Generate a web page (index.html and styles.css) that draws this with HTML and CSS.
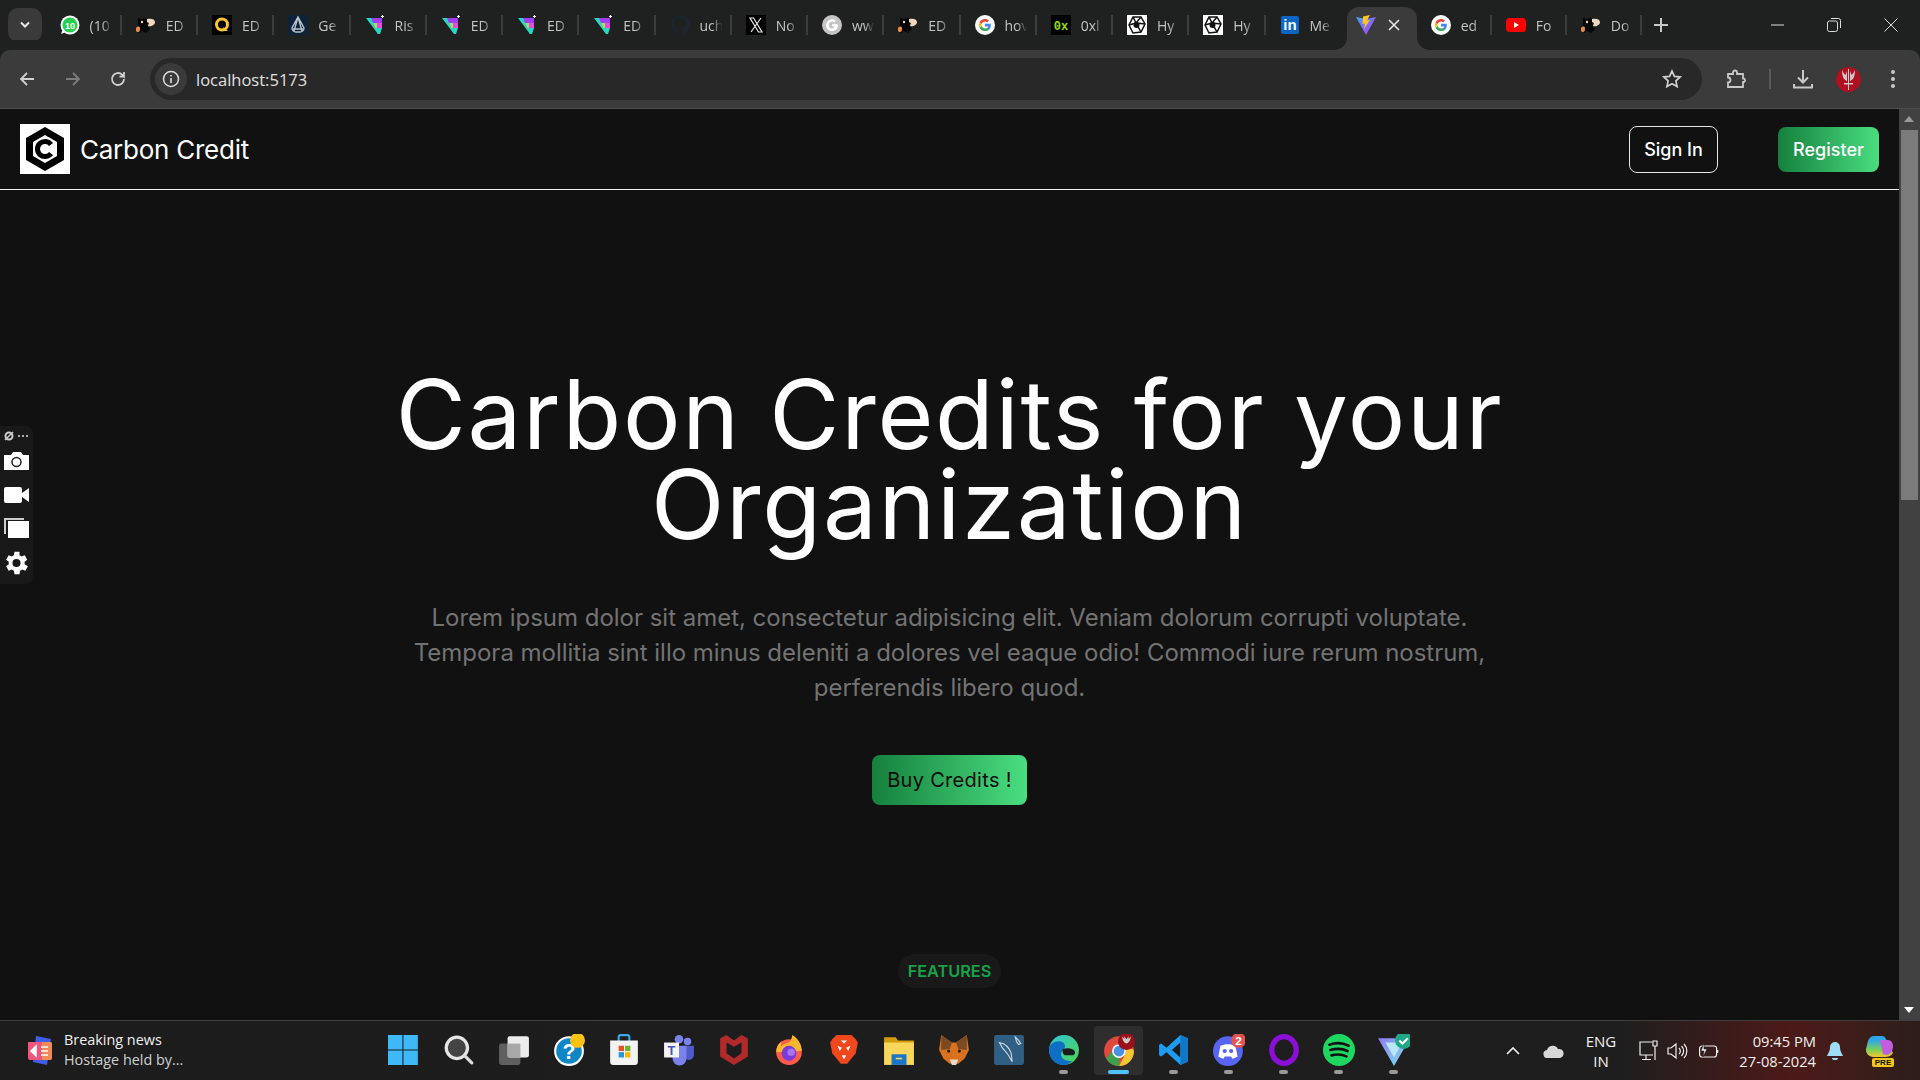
FILE: index.html
```html
<!DOCTYPE html>
<html>
<head>
  <title>Carbon Credit</title>
  <meta charset="utf-8">
  <link rel="stylesheet" href="styles.css">
</head>
<body>
  <svg class="defs" width="0" height="0">
    <defs>
      <symbol id="i-monkey" viewBox="0 0 20 20">
        <path d="M2 3l4 1 4-1 2 3-1 4 3 4-4 4-4-2-3 2-2-4 1-4z" fill="#050505"/>
        <path d="M11 4c4-1 8 0 8 3s-4 5-7 4l1-3-2-1z" fill="#f2d6bd"/>
        <path d="M0 13c1-2 4-2 4 0s0 4-2 4-3-3-2-4z" fill="#e98a45"/>
        <circle cx="6" cy="7" r="1.2" fill="#f2d6bd"/>
      </symbol>
      <symbol id="i-tri" viewBox="0 0 20 20">
        <path d="M1 3h6l8 16h-2z" fill="#27d8c0"/>
        <path d="M6 3h11v10H10z" fill="#a23df5"/>
        <path d="M8 8h4v5h-2z" fill="#8cf05a"/>
        <path d="M12 8h5v5h-5z" fill="#e84de0"/>
        <path d="M10 13h7l-2 6h-2z" fill="#27d8c0"/>
        <path d="M17 0h1v1h1v1h-1v1h-1V2h-1V1h1z" fill="#fff"/>
      </symbol>
      <symbol id="i-google" viewBox="0 0 20 20">
        <circle cx="10" cy="10" r="10" fill="#fff"/>
        <path d="M15.8 10.2c0-.5 0-1-.1-1.4H10v2.7h3.3c-.2.8-.6 1.4-1.3 1.9l2 1.6c1.1-1.1 1.8-2.8 1.8-4.800z" fill="#4285f4"/>
        <path d="M10 16c1.6 0 3-.5 4-1.500l-2-1.600c-.5.4-1.200.6-2 .6-1.600 0-2.900-1-3.400-2.400l-2 1.600C5.600 14.700 7.600 16 10 16z" fill="#34a853"/>
        <path d="M6.600 11.100c-.2-.7-.2-1.500 0-2.200l-2-1.600c-.8 1.700-.8 3.700 0 5.400z" fill="#fbbc05"/>
        <path d="M10 6.400c.9 0 1.700.3 2.300.9l1.700-1.700C13 4.600 11.600 4 10 4 7.600 4 5.600 5.300 4.600 7.300l2 1.600C7.100 7.500 8.400 6.400 10 6.400z" fill="#ea4335"/>
      </symbol>
      <symbol id="i-hy" viewBox="0 0 20 20">
        <rect width="20" height="20" fill="#fff"/>
        <path d="M6 2h8l4 7-4 8-8 1-4-8z" fill="none" stroke="#111" stroke-width="1.5"/>
        <path d="M6 2l3 6-7 2M14 2L9 8l5 9M18 9L9 8" fill="none" stroke="#111" stroke-width="1.5"/>
        <circle cx="9.5" cy="10" r="3" fill="#111"/>
      </symbol>
      <linearGradient id="vite-body" x1="0" y1="0" x2="1" y2="1">
        <stop offset="0" stop-color="#41a5f5"/>
        <stop offset="1" stop-color="#bd34fe"/>
      </linearGradient>
    </defs>
  </svg>

  <!-- browser tabs -->
  <div class="tabstrip">
    <div class="tab-menu"><svg width="12" height="8" viewBox="0 0 12 8"><path d="M2 1.500l4 4 4-4" fill="none" stroke="#e8e8e8" stroke-width="2"/></svg></div>

    <div class="tab"><svg class="fav" viewBox="0 0 20 20"><circle cx="10" cy="10" r="9.500" fill="#fff"/><circle cx="10" cy="10" r="7.500" fill="#25d04f"/><path d="M1 19l2-5 3 3z" fill="#fff"/><text x="10" y="13.500" class="fav-num">10</text></svg><span class="tab-text">(10</span></div>
    <div class="tab"><svg class="fav"><use href="#i-monkey"/></svg><span class="tab-text">ED</span></div>
    <div class="tab"><svg class="fav" viewBox="0 0 20 20"><rect width="20" height="20" fill="#000"/><circle cx="10" cy="9.500" r="5.500" fill="none" stroke="#fbc531" stroke-width="3"/><path d="M11 12l5 4h-4z" fill="#fbc531"/></svg><span class="tab-text">ED</span></div>
    <div class="tab"><svg class="fav" viewBox="0 0 20 20"><rect width="20" height="20" fill="#0e2238"/><path d="M10 2l6 11a4 4 0 0 1-4 4H8a4 4 0 0 1-4-4z M5 14h10 M10 2L6 16 M10 2l4 14" fill="none" stroke="#b9c3cc" stroke-width="1.400"/></svg><span class="tab-text">Ge</span></div>
    <div class="tab"><svg class="fav"><use href="#i-tri"/></svg><span class="tab-text">Ris</span></div>
    <div class="tab"><svg class="fav"><use href="#i-tri"/></svg><span class="tab-text">ED</span></div>
    <div class="tab"><svg class="fav"><use href="#i-tri"/></svg><span class="tab-text">ED</span></div>
    <div class="tab"><svg class="fav"><use href="#i-tri"/></svg><span class="tab-text">ED</span></div>
    <div class="tab"><svg class="fav" viewBox="0 0 20 20"><path d="M10 1a9 9 0 0 0-3 17.500v-3c-3 .5-3.500-1.500-4-2 2-.5 2.500 1 4 1 0-1 .5-1.500 1-2-3-.5-4-2-4-4.500 0-1 .5-2 1-2.500 0-1 0-2 .5-2.500 1 0 2 .5 3 1 1-.3 2-.3 3 0 1-.5 2-1 3-1 .5.500.5 1.500.5 2.500.5.500 1 1.500 1 2.500 0 2.500-1 4-4 4.500.5.500 1 1.500 1 2.500v4A9 9 0 0 0 10 1z" fill="#1c2530"/></svg><span class="tab-text">uch</span></div>
    <div class="tab"><svg class="fav" viewBox="0 0 20 20"><rect width="20" height="20" fill="#000"/><path d="M4 3h3.500L16 17h-3.500zM15 3L5 17" fill="none" stroke="#e8e8e8" stroke-width="1.200"/></svg><span class="tab-text">No</span></div>
    <div class="tab"><svg class="fav" viewBox="0 0 20 20"><circle cx="10" cy="10" r="10" fill="#c4c4c4"/><path d="M15 9H10v2.500h2.500c-.5 1.200-1.400 1.900-2.500 1.900a3.400 3.400 0 1 1 2.200-6l1.600-1.800A6 6 0 1 0 16 10z" fill="#fff"/></svg><span class="tab-text">ww</span></div>
    <div class="tab"><svg class="fav"><use href="#i-monkey"/></svg><span class="tab-text">ED</span></div>
    <div class="tab"><svg class="fav"><use href="#i-google"/></svg><span class="tab-text">hov</span></div>
    <div class="tab"><svg class="fav" viewBox="0 0 20 20"><rect width="20" height="20" fill="#000"/><text x="10" y="14.500" class="fav-hex">0x</text></svg><span class="tab-text">0xl</span></div>
    <div class="tab"><svg class="fav"><use href="#i-hy"/></svg><span class="tab-text">Hy</span></div>
    <div class="tab"><svg class="fav"><use href="#i-hy"/></svg><span class="tab-text">Hy</span></div>
    <div class="tab tab-nosep"><svg class="fav" viewBox="0 0 20 20"><rect x="1" y="1" width="18" height="18" rx="2" fill="#0a66c2"/><text x="10" y="15" class="fav-in">in</text></svg><span class="tab-text">Me</span></div>
    <div class="tab tab-active">
      <svg class="fav" viewBox="0 0 20 20"><path d="M0 2l10 18L20 2l-9.500 2z" fill="url(#vite-body)"/><path d="M14 0L7 1.500 6.500 9 9 8.500 8 14l6-9-3 .5z" fill="#ffc517"/></svg>
      <svg class="tab-x" width="12" height="12" viewBox="0 0 12 12"><path d="M1 1l10 10M11 1L1 11" stroke="#e8e8e8" stroke-width="1.600"/></svg>
    </div>
    <div class="tab tab-narrow"><svg class="fav"><use href="#i-google"/></svg><span class="tab-text">ed</span></div>
    <div class="tab tab-narrow"><svg class="fav" viewBox="0 0 20 20"><rect y="3" width="20" height="14" rx="3.500" fill="#f00"/><path d="M8 7l5 3-5 3z" fill="#fff"/></svg><span class="tab-text">Fo</span></div>
    <div class="tab tab-narrow"><svg class="fav"><use href="#i-monkey"/></svg><span class="tab-text">Do</span></div>

    <div class="tab-new"><svg width="14" height="14" viewBox="0 0 14 14"><path d="M7 0v14M0 7h14" stroke="#c8c8c8" stroke-width="2"/></svg></div>

    <div class="win-btns">
      <svg width="14" height="14" viewBox="0 0 14 14"><path d="M1 7h13" stroke="#ddd"/></svg>
      <svg width="14" height="14" viewBox="0 0 14 14"><rect x=".5" y="3" width="10" height="10.500" rx="2" fill="none" stroke="#ddd"/><path d="M4 .5h7.500a2 2 0 0 1 2 2V10" fill="none" stroke="#ddd"/></svg>
      <svg width="14" height="14" viewBox="0 0 14 14"><path d="M.5.5l13 13M13.500.5l-13 13" stroke="#ddd"/></svg>
    </div>
  </div>

  <!-- address bar -->
  <div class="toolbar">
    <div class="nav-btns">
      <svg width="18" height="18" viewBox="0 0 18 18"><path d="M16 9H3M9 3L3 9l6 6" fill="none" stroke="#d0d0d0" stroke-width="1.800"/></svg>
      <svg width="18" height="18" viewBox="0 0 18 18"><path d="M2 9h13M9 3l6 6-6 6" fill="none" stroke="#7c7c7c" stroke-width="1.800"/></svg>
      <svg width="18" height="18" viewBox="0 0 18 18"><path d="M15 9a6 6 0 1 1-1.800-4.300L15 6.500V2M15 6.500h-4.500" fill="none" stroke="#d0d0d0" stroke-width="1.800"/></svg>
    </div>
    <div class="address">
      <div class="site-info"><svg width="18" height="18" viewBox="0 0 18 18"><circle cx="9" cy="9" r="7.500" fill="none" stroke="#dcdcdc" stroke-width="1.500"/><path d="M9 8v5M9 5v1.600" stroke="#dcdcdc" stroke-width="1.600"/></svg></div>
      <span class="url">localhost:5173</span>
      <svg class="star" width="20" height="20" viewBox="0 0 20 20"><path d="M10 2l2.400 5.400 5.800.6-4.300 3.900 1.200 5.700L10 14.700l-5.100 2.900 1.200-5.700L1.800 8l5.800-.6z" fill="none" stroke="#d0d0d0" stroke-width="1.700"/></svg>
    </div>
    <div class="tool-btns">
      <svg width="20" height="20" viewBox="0 0 20 20"><path d="M2 5h5V3.500a2 2 0 0 1 4 0V5h6v4.500h1a2 2 0 0 1 0 3.500h-1v5H2v-4.500a2.500 2.500 0 0 0 0-5z" fill="none" stroke="#c8c8c8" stroke-width="1.800"/></svg>
      <span class="tool-sep"></span>
      <svg class="tool-dl" width="20" height="20" viewBox="0 0 20 20"><path d="M10 1v12M5 8.500l5 5 5-5M1 15v3.500h18V15" fill="none" stroke="#c8c8c8" stroke-width="2"/></svg>
      <svg class="tool-avatar" width="25" height="25" viewBox="0 0 25 25"><circle cx="12.500" cy="12.500" r="12.500" fill="#b01020"/><path d="M6 3c0 7 2 10 5 11V4L9.500 8C8 7 7 5 6 3zM19 3c0 7-2 10-5 11V4l1.500 4C17 7 18 5 19 3zM12 2h1v21h-1zM8 16h9v1.500H8z" fill="#c9c9c9"/></svg>
      <svg class="tool-dots" width="6" height="20" viewBox="0 0 6 20"><circle cx="3" cy="3" r="2" fill="#c8c8c8"/><circle cx="3" cy="10" r="2" fill="#c8c8c8"/><circle cx="3" cy="17" r="2" fill="#c8c8c8"/></svg>
    </div>
  </div>

  <div class="viewport">
    <div class="page">
      <nav class="navbar">
        <a class="brand">
          <svg class="brand-logo" viewBox="0 0 50 50">
            <rect width="50" height="50" fill="#fff"/>
            <path d="M25 3l19 11v22L25 47 6 36V14z" fill="#000"/>
            <path d="M25 11l12 7v14l-12 7-12-7V18z" fill="#fff"/>
            <path d="M31 20.500a7.500 7.500 0 1 0 0 9" fill="none" stroke="#000" stroke-width="5"/>
            <circle cx="25" cy="25" r="2.500" fill="#fff"/>
          </svg>
          <span class="brand-name">Carbon Credit</span>
        </a>
        <div class="nav-actions">
          <button class="btn btn-outline">Sign In</button>
          <button class="btn btn-green">Register</button>
        </div>
      </nav>

      <section class="hero">
        <h1 class="hero-title">Carbon Credits for your<br>Organization</h1>
        <p class="hero-text">Lorem ipsum dolor sit amet, consectetur adipisicing elit. Veniam dolorum corrupti voluptate.<br>Tempora mollitia sint illo minus deleniti a dolores vel eaque odio! Commodi iure rerum nostrum,<br>perferendis libero quod.</p>
        <button class="btn btn-buy">Buy Credits !</button>
        <span class="pill">FEATURES</span>
      </section>

      <!-- screen recorder extension panel -->
      <div class="recorder">
        <svg class="rec-top" width="26" height="10" viewBox="0 0 26 10"><circle cx="5" cy="5" r="3.500" fill="none" stroke="#ccc" stroke-width="2"/><path d="M1 9l8-8" stroke="#ccc" stroke-width="1.500"/><circle cx="15" cy="5" r="1" fill="#ddd"/><circle cx="19" cy="5" r="1" fill="#ddd"/><circle cx="23" cy="5" r="1" fill="#ddd"/></svg>
        <svg class="rec-cam" width="25" height="18" viewBox="0 0 25 18"><path d="M0 3h7l2-3h8l2 3h6v15H0z" fill="#fff"/><circle cx="12.500" cy="10" r="4.500" fill="#fff" stroke="#222" stroke-width="1.500"/></svg>
        <svg class="rec-video" width="25" height="16" viewBox="0 0 25 16"><rect width="18" height="16" rx="2" fill="#fff"/><path d="M18 6l7-5v14l-7-5z" fill="#fff"/></svg>
        <svg class="rec-win" width="25" height="20" viewBox="0 0 25 20"><path d="M0 0h20v2H2v14H0z" fill="#ccc"/><rect x="4" y="3" width="21" height="17" fill="#fff"/></svg>
        <svg class="rec-gear" width="25" height="24" viewBox="3 2.500 18 19"><path fill="#fff" fill-rule="evenodd" d="M18.400 13a7.500 7.500 0 0 0 0-2l2.100-1.600-2-3.500-2.500 1a7.500 7.500 0 0 0-1.700-1L14.400 3h-4L10 5.900a7.500 7.500 0 0 0-1.700 1l-2.500-1-2 3.500L5.900 11a7.500 7.500 0 0 0 0 2l-2.100 1.600 2 3.500 2.500-1a7.500 7.500 0 0 0 1.700 1l.4 2.900h4l.4-2.900a7.500 7.500 0 0 0 1.700-1l2.500 1 2-3.500zM12 15.200a3.200 3.200 0 1 1 0-6.400 3.200 3.200 0 0 1 0 6.400z"/></svg>
      </div>
    </div>

    <div class="scrollbar">
      <div class="scroll-up"></div>
      <div class="scroll-thumb"></div>
      <div class="scroll-track"></div>
      <div class="scroll-down"></div>
    </div>
  </div>

  <!-- windows taskbar -->
  <div class="taskbar">
    <div class="news">
      <svg width="32" height="32" viewBox="0 0 32 32"><path d="M12 1l15 3-4 26-14-3z" fill="#3f5ee8"/><path d="M4 7h22a2 2 0 0 1 2 2v14a2 2 0 0 1-2 2H6a2 2 0 0 1-2-2z" fill="#f0567c"/><path d="M18 7h8a2 2 0 0 1 2 2v14a2 2 0 0 1-2 2h-8z" fill="#f08a5a"/><path d="M7 16l5-5v10zM17 12h7M17 16h7M17 20h7" fill="#fff" stroke="#fff" stroke-width="1.500"/></svg>
      <div class="news-text">
        <div class="news-head">Breaking news</div>
        <div class="news-sub">Hostage held by...</div>
      </div>
    </div>

    <div class="task-icons">
      <div class="task"><svg viewBox="1 0 30 30"><path d="M1 1h13.500v13.500H1zM15.500 1H29v13.500H15.500zM1 15.500h13.500V29H1zM15.500 15.500H29V29H15.500z" fill="#3fb8f8"/></svg></div>
      <div class="task"><svg viewBox="0 0 30 30"><circle cx="13" cy="13" r="10" fill="#444" stroke="#e6e6e6" stroke-width="3"/><path d="M20 20l7 7" stroke="#ddd" stroke-width="3" stroke-linecap="round"/></svg></div>
      <div class="task"><svg viewBox="0 0 30 30"><rect x="1" y="9" width="20" height="20" rx="2" fill="#5f5f5f"/><rect x="9" y="2" width="20" height="20" rx="2" fill="#ececec"/><rect x="9" y="9" width="12" height="13" fill="#a8a8a8"/></svg></div>
      <div class="task"><svg viewBox="0 0 30 30"><circle cx="15" cy="16" r="13" fill="#0f86c6" stroke="#fff" stroke-width="2"/><text x="15" y="23" class="help-q">?</text><circle cx="23" cy="6" r="7" fill="#ffc20e"/></svg></div>
      <div class="task"><svg viewBox="0 0 30 30"><path d="M10 7V3a2 2 0 0 1 2-2h6a2 2 0 0 1 2 2v4" fill="none" stroke="#39a9e8" stroke-width="2"/><path d="M2 6h26v20a3 3 0 0 1-3 3H5a3 3 0 0 1-3-3z" fill="#f3f3f3"/><rect x="10" y="11" width="5" height="5" fill="#e8502a"/><rect x="16" y="11" width="5" height="5" fill="#6fb52c"/><rect x="10" y="17" width="5" height="5" fill="#1f9be0"/><rect x="16" y="17" width="5" height="5" fill="#fbb80a"/></svg></div>
      <div class="task"><svg viewBox="0 0 30 30"><circle cx="23" cy="7" r="3.500" fill="#7b83eb"/><circle cx="15" cy="5" r="4" fill="#7b83eb"/><path d="M19 11h10v9a5 5 0 0 1-7 4z" fill="#5059c9"/><path d="M9 11h13v12a6 6 0 0 1-13 0z" fill="#7b83eb"/><rect x="1" y="8" width="14" height="14" fill="#f4f4f4"/><text x="8" y="19.500" class="teams-t">T</text></svg></div>
      <div class="task"><svg viewBox="0 0 30 30"><path d="M2 4l6-3 7 5 7-5 6 3v17l-13 8-13-8zM8 8v10l7 5 7-5V8l-7 4z" fill="#b02a2a" fill-rule="evenodd"/></svg></div>
      <div class="task"><svg viewBox="0 0 30 30"><circle cx="15" cy="17" r="12" fill="#ff5a4a"/><path d="M3 17a12 12 0 0 1 5-10l-1 5c3-3 6-4 8-4 2-2 3-5 3-7 5 3 9 8 9 15z" fill="#ffb52e"/><circle cx="15" cy="18" r="7" fill="#7a3bd6"/><circle cx="17" cy="17" r="3.500" fill="#a774f0"/></svg></div>
      <div class="task"><svg viewBox="0 0 30 30"><path d="M8 1h14l4 4 2 3-2 10-8 10h-6L4 18 2 8l2-3z" fill="#f1471d"/><path d="M9 11l4 2-2 3zM21 11l-4 2 2 3zM13 20h4l-2 4z" fill="#fff"/><path d="M12 6h6l-3 3z" fill="#fff"/></svg></div>
      <div class="task"><svg viewBox="0 0 30 30"><path d="M1 3h11l2 3h15v4H1z" fill="#d39c0e"/><path d="M1 8h28v21H1z" fill="#f9d65c"/><path d="M8 19h14v10H8z" fill="#1976c8"/><path d="M12 23h6" stroke="#f9d65c" stroke-width="1.500"/></svg></div>
      <div class="task"><svg viewBox="0 0 30 30"><path d="M3 1l10 7h4L27 1l2 14-4 8-6 5h-8l-6-5-4-8z" fill="#d9711f"/><path d="M3 1l10 7-2 6-8 1zM27 1L17 8l2 6 8 1z" fill="#7a4a25"/><path d="M11 24h8l-2 5h-4z" fill="#e8dcc8"/><circle cx="10" cy="16" r="1.500" fill="#222"/><circle cx="20" cy="16" r="1.500" fill="#222"/></svg></div>
      <div class="task"><svg viewBox="0 0 30 30"><rect x="1" y="1" width="28" height="28" rx="2" fill="#2f5f82"/><path d="M6 8c5 1 9 4 11 10l1 8c-2-3-3-6-5-8s-5-5-7-10zM21 3l3 3 2 3-2 1-2-3z" fill="none" stroke="#cfdbe4"/></svg></div>
      <div class="task task-open"><svg viewBox="0 0 30 30"><defs><linearGradient id="edge" x1="0" y1="0" x2="1" y2="1"><stop offset="0" stop-color="#2fc7d8"/><stop offset="1" stop-color="#4fd34f"/></linearGradient></defs><circle cx="15" cy="15" r="14" fill="url(#edge)"/><path d="M1 15c0-6 6-9 11-8 4 1 5 5 3 7-3 2-4 6-1 9 2 2 6 3 9 2-3 3-6 4-9 4C7 29 1 23 1 15z" fill="#0f6fc4"/><path d="M14 14c4-1 9-1 11 2 1 2 0 4-3 4h-6c-2-1-3-4-2-6z" fill="#1c1c1c"/></svg></div>
      <div class="task task-active"><svg viewBox="0 0 30 30"><circle cx="15" cy="16" r="14" fill="#dd4b3e"/><path d="M15 30A14 14 0 0 1 3 23l7-9 6 6z" fill="#3f9f4e"/><path d="M29 16a14 14 0 0 1-14 14l6-11 1-5h6z" fill="#f2c531"/><circle cx="15" cy="16" r="6.500" fill="#fff"/><circle cx="15" cy="16" r="5" fill="#4a90e2"/><circle cx="22" cy="7" r="8" fill="#9a0f1c"/><path d="M18 2c0 4 2 6 4 7 2-1 4-3 4-7l-2 3V2l-2 3-2-3v3z" fill="#ccc"/></svg></div>
      <div class="task task-open"><svg viewBox="0 0 30 30"><path d="M21 1l7 3v22l-7 3L8 17l-5 4-2-1V10l2-1 5 4z" fill="#1f9cf0"/><path d="M21 8l-8 7 8 7z" fill="#1c1c1c"/><path d="M21 1l7 3v22l-7 3z" fill="#0f78c8"/></svg></div>
      <div class="task task-open"><svg viewBox="0 0 30 30"><circle cx="14" cy="16" r="14" fill="#5865f2"/><path d="M7 11c4-2 10-2 14 0l2 10c-2 1-3 2-5 2l-1-2H11l-1 2c-2 0-3-1-5-2z" fill="#fff"/><circle cx="11" cy="16" r="2" fill="#5865f2"/><circle cx="17" cy="16" r="2" fill="#5865f2"/><circle cx="24" cy="6" r="7" fill="#e5534f"/><text x="24" y="10" class="badge-num">2</text></svg></div>
      <div class="task task-open"><svg viewBox="0 0 30 30"><ellipse cx="15" cy="15" rx="11.500" ry="12.500" fill="none" stroke="#8a10d8" stroke-width="5"/></svg></div>
      <div class="task task-open"><svg viewBox="0 0 30 30"><circle cx="15" cy="15" r="15" fill="#1ed760"/><path d="M6 10c6-2 12-2 18 1M7 15c5-1.500 11-1.500 16 1M8 20c4-1 10-1 14 1" fill="none" stroke="#111" stroke-width="2.500" stroke-linecap="round"/></svg></div>
      <div class="task task-open"><svg viewBox="0 0 30 30"><defs><linearGradient id="vee" x1="0" y1="0" x2="1" y2="1"><stop offset="0" stop-color="#8f7bf0"/><stop offset="1" stop-color="#7de8f0"/></linearGradient></defs><path d="M0 4h30L15 30z" fill="url(#vee)"/><path d="M7 8h16l-8 14z" fill="#b9e6f5"/><circle cx="24" cy="6" r="8" fill="#1fa888"/><path d="M20 6l3 3 5-5" fill="none" stroke="#fff" stroke-width="2"/></svg></div>
    </div>

    <div class="tray">
      <svg class="tray-chevron" width="14" height="9" viewBox="0 0 14 9"><path d="M1 8l6-6 6 6" fill="none" stroke="#eee" stroke-width="1.600"/></svg>
      <svg class="tray-cloud" width="21" height="14" viewBox="0 0 21 14"><path d="M5 14a4 4 0 0 1-1-8 6 6 0 0 1 11-1 4.500 4.500 0 0 1 2 9z" fill="#d8d8d8"/></svg>
      <div class="tray-lang">ENG<br>IN</div>
      <svg class="tray-net" width="20" height="21" viewBox="0 0 20 21"><path d="M13 2H1v13h13M7 15v4M3 19.500h9M16 6v14M14 1h4v5h-4z" fill="none" stroke="#eee" stroke-width="1.200"/></svg>
      <svg class="tray-vol" width="21" height="18" viewBox="0 0 21 18"><path d="M1 6h3l5-4v14l-5-4H1zM12 6a4 4 0 0 1 0 6M14.500 4a7 7 0 0 1 0 10M17 2a10 10 0 0 1 0 14" fill="none" stroke="#eee" stroke-width="1.200"/></svg>
      <svg class="tray-bat" width="20" height="16" viewBox="0 0 20 16"><rect x=".6" y="3" width="17" height="11" rx="2.500" fill="none" stroke="#eee" stroke-width="1.200"/><path d="M18.500 7v3" stroke="#eee" stroke-width="1.600"/><path d="M5 0L2 8h3l-1 6 4-8H5z" fill="#eee" stroke="#222" stroke-width=".6"/></svg>
      <div class="tray-clock"><div>09:45 PM</div><div>27-08-2024</div></div>
      <svg class="tray-bell" width="16" height="20" viewBox="0 0 16 20"><path d="M8 1a5 5 0 0 1 5 5c0 5 3 8 3 9H0c0-1 3-4 3-9a5 5 0 0 1 5-5z" fill="#9fdcf5"/><path d="M5 17h6a3 2 0 0 1-6 0z" fill="#9fdcf5"/></svg>
      <div class="copilot">
        <svg width="29" height="24" viewBox="0 0 29 24"><defs><linearGradient id="cop" x1="0" y1="0" x2="0" y2="1"><stop offset=".2" stop-color="#2ea6e8"/><stop offset=".65" stop-color="#7bd05a"/><stop offset="1" stop-color="#f5c72e"/></linearGradient></defs><path d="M9 1h8c2 0 3 1 4 3l7 14c-2 3-5 4-8 4H8a7 7 0 0 1-7-8l2-8c1-3 3-5 6-5z" fill="url(#cop)"/><path d="M15 5h8c3 0 5 3 5 6 0 4-2 8-6 9l-4-1z" fill="#c45ce0"/></svg>
        <span class="pre-badge">PRE</span>
      </div>
    </div>
  </div>
</body>
</html>
```

FILE: styles.css
```css
* {
  box-sizing: border-box;
}

body {
  margin: 0;
  width: 1920px;
  height: 1080px;
  overflow: hidden;
  display: flex;
  flex-direction: column;
  background: #111;
  font-family: "Open Sans", "Noto Sans", sans-serif;
}

.defs {
  position: absolute;
}

/* browser tabs */
.tabstrip {
  height: 50px;
  display: flex;
  align-items: center;
  background: #1f2120;
  padding-left: 8px;
  flex-shrink: 0;
}

.tab-menu {
  width: 34px;
  height: 34px;
  margin-right: 3.5px;
  border-radius: 10px;
  background: #3a3a3a;
  display: flex;
  align-items: center;
  justify-content: center;
}

.tab {
  width: 76.25px;
  height: 50px;
  padding-left: 14px;
  display: flex;
  align-items: center;
  gap: 10px;
  position: relative;
}

.tab-narrow {
  width: 75px;
}

.tab::after {
  content: "";
  position: absolute;
  right: 0;
  top: 15px;
  height: 20px;
  width: 2px;
  background: #3c3e3e;
}

.tab-nosep::after {
  display: none;
}

.fav {
  width: 20px;
  height: 20px;
  flex-shrink: 0;
}

.fav-num {
  font: 700 9px "Liberation Sans", sans-serif;
  fill: #fff;
  text-anchor: middle;
}

.fav-hex {
  font: 700 12px "Liberation Mono", monospace;
  fill: #8fe000;
  text-anchor: middle;
}

.fav-in {
  font: 700 15px "Liberation Sans", sans-serif;
  fill: #fff;
  text-anchor: middle;
}

.tab-text {
  width: 27px;
  font-size: 14px;
  color: #c4c4c4;
  white-space: nowrap;
  -webkit-mask-image: linear-gradient(to right, #000 45%, transparent 82%);
  mask-image: linear-gradient(to right, #000 45%, transparent 82%);
}

.tab-active {
  width: 70px;
  height: 43px;
  margin-top: 7px;
  margin-left: 5px;
  padding: 0 0 8px 9px;
  background: #3b3b3b;
  border-radius: 12px 12px 0 0;
  gap: 12px;
}

.tab-active::before,
.tab-active::after {
  content: "";
  display: block;
  position: absolute;
  top: auto;
  bottom: 0;
  width: 12px;
  height: 12px;
}

.tab-active::before {
  left: -12px;
  background: radial-gradient(circle at 0 0, transparent 11.5px, #3b3b3b 12px);
}

.tab-active::after {
  right: -12px;
  background: radial-gradient(circle at 100% 0, transparent 11.5px, #3b3b3b 12px);
}

.tab-new {
  width: 38px;
  display: flex;
  justify-content: center;
}

.win-btns {
  margin-left: auto;
  padding-right: 22px;
  display: flex;
  gap: 43px;
}

/* address bar */
.toolbar {
  height: 59px;
  flex-shrink: 0;
  background: #3b3b3b;
  border-bottom: 1px solid #4c4c4c;
  display: flex;
  align-items: center;
  border-radius: 10px 10px 0 0;
  box-shadow: 0 -10px 0 #1f2120;
}

.nav-btns {
  width: 150px;
  padding: 0 23px 0 18px;
  display: flex;
  justify-content: space-between;
}

.address {
  width: 1552px;
  height: 42px;
  border-radius: 21px;
  background: #282828;
  display: flex;
  align-items: center;
  padding-left: 5px;
  padding-right: 20px;
}

.site-info {
  width: 32px;
  height: 32px;
  border-radius: 50%;
  background: #3a3a3a;
  display: flex;
  align-items: center;
  justify-content: center;
}

.url {
  margin-left: 9px;
  font-size: 16.5px;
  color: #e0e0e0;
}

.star {
  margin-left: auto;
}

.tool-btns {
  flex: 1;
  display: flex;
  align-items: center;
  padding-left: 24px;
}

.tool-sep {
  width: 2px;
  height: 20px;
  background: #5a5a5a;
  margin-left: 23px;
}

.tool-dl {
  margin-left: 22px;
}

.tool-avatar {
  margin-left: 23px;
}

.tool-dots {
  margin-left: 29px;
}

/* page */
.viewport {
  flex: 1;
  display: flex;
  min-height: 0;
  position: relative;
}

.page {
  flex: 1;
  background: #111;
  overflow: hidden;
  color: #fff;
  font-family: "Inter", "Lato", sans-serif;
}

.navbar {
  height: 81px;
  border-bottom: 1px solid #f2f2f2;
  display: flex;
  align-items: center;
  justify-content: space-between;
  padding: 0 20px;
}

.brand {
  display: flex;
  align-items: center;
  gap: 10px;
}

.brand-logo {
  width: 50px;
  height: 50px;
}

.brand-name {
  font-size: 26px;
  letter-spacing: -0.25px;
}

.nav-actions {
  display: flex;
  align-items: center;
  gap: 60px;
}

.btn {
  font-family: inherit;
  font-size: 18px;
  font-weight: 500;
  border-radius: 8px;
  cursor: pointer;
}

.btn-outline {
  width: 89px;
  height: 47px;
  background: transparent;
  border: 1px solid #e6e6e6;
  color: #fff;
}

.btn-green {
  width: 101px;
  height: 45px;
  border: 0;
  color: #fff;
  background: linear-gradient(to right, #15803d, #4ade80);
}

.hero {
  display: flex;
  flex-direction: column;
  align-items: center;
  padding-top: 179px;
  text-align: center;
}

.hero-title {
  margin: 0;
  font-size: 96px;
  font-weight: 400;
  line-height: 90px;
  letter-spacing: 1.7px;
}

.hero-text {
  margin: 51px 0 50px;
  font-size: 24px;
  line-height: 35px;
  color: #737373;
  letter-spacing: -0.02px;
}

.btn-buy {
  width: 155px;
  height: 50px;
  border: 0;
  font-size: 20px;
  font-weight: 400;
  letter-spacing: 0.3px;
  color: #0c0c0c;
  background: linear-gradient(to right, #15803d, #4ade80);
}

.pill {
  margin-top: 149px;
  width: 103px;
  height: 34px;
  border-radius: 17px;
  background: #191919;
  color: #16a34a;
  font-size: 16.3px;
  font-weight: 600;
  line-height: 34px;
}

.recorder {
  position: absolute;
  left: 0;
  top: 317px;
  width: 33px;
  height: 158px;
  padding: 5px 4px;
  background: #191919;
  border-radius: 0 8px 8px 0;
  display: flex;
  flex-direction: column;
  align-items: flex-start;
}

.rec-cam {
  margin-top: 11px;
}

.rec-video {
  margin-top: 17px;
}

.rec-win {
  margin-top: 15px;
}

.rec-gear {
  margin-top: 13px;
}

.scrollbar {
  width: 21px;
  display: flex;
  flex-direction: column;
  align-items: center;
  background: #414141;
}

.scroll-up,
.scroll-down {
  width: 100%;
  height: 21px;
  position: relative;
}

.scroll-up::after {
  content: "";
  position: absolute;
  left: 5px;
  top: 7px;
  border: 5px solid transparent;
  border-top: 0;
  border-bottom: 6px solid #9a9a9a;
}

.scroll-down::after {
  content: "";
  position: absolute;
  left: 5px;
  top: 8px;
  border: 5px solid transparent;
  border-bottom: 0;
  border-top: 6px solid #fff;
}

.scroll-thumb {
  width: 17px;
  height: 370px;
  background: #7b7b7b;
}

.scroll-track {
  flex: 1;
}

/* windows taskbar */
.taskbar {
  height: 60px;
  flex-shrink: 0;
  border-top: 1px solid #3f3f3f;
  display: flex;
  align-items: center;
  background: linear-gradient(to right, #1c1c1c 0, #1e1e1e 1620px, #4c1a18 1790px, #3c1d1a 1860px, #2c1e1a 1920px);
  color: #f0f0f0;
  font-family: "Open Sans", "Noto Sans", sans-serif;
}

.news {
  width: 376px;
  padding-left: 24px;
  display: flex;
  align-items: center;
  gap: 8px;
}

.news-text {
  padding-bottom: 2px;
  font-size: 14.4px;
  line-height: 20px;
}

.news-sub {
  color: #cfcfcf;
}

.task-icons {
  display: flex;
  align-items: center;
  margin-top: -1px;
}

.task {
  width: 49px;
  height: 49px;
  margin: 0 3px;
  display: flex;
  align-items: center;
  justify-content: center;
  position: relative;
}

.task svg {
  width: 32px;
  height: 32px;
}

.task-open::after,
.task-active::after {
  content: "";
  position: absolute;
  bottom: 1px;
  left: 20px;
  width: 9px;
  height: 4px;
  border-radius: 2px;
  background: #9a9a9a;
}

.task-active {
  background: #2e2e2e;
  border-radius: 4px;
}

.task-active::after {
  left: 14px;
  width: 21px;
  background: #4cc2ff;
}

.help-q {
  font: 700 20px "Liberation Sans", sans-serif;
  fill: #fff;
  text-anchor: middle;
}

.teams-t {
  font: 700 12px "Liberation Sans", sans-serif;
  fill: #4b53bc;
  text-anchor: middle;
}

.badge-num {
  font: 700 11px "Liberation Sans", sans-serif;
  fill: #fff;
  text-anchor: middle;
}

.tray {
  flex: 1;
  display: flex;
  align-items: center;
  padding-left: 85px;
  font-size: 14.7px;
}

.tray-cloud {
  margin-left: 23px;
}

.tray-lang {
  width: 50px;
  margin-left: 12px;
  text-align: center;
  line-height: 20px;
  font-size: 15px;
}

.tray-net {
  margin-left: 13px;
}

.tray-vol {
  margin-left: 8px;
}

.tray-bat {
  margin-left: 11px;
}

.tray-clock {
  width: 96px;
  margin-left: 1px;
  text-align: right;
  line-height: 20px;
}

.tray-bell {
  margin-left: 11px;
}

.copilot {
  margin-left: 22px;
  position: relative;
  width: 29px;
  height: 32px;
}

.pre-badge {
  position: absolute;
  right: 0;
  bottom: 0;
  width: 22px;
  height: 9px;
  background: #f5c518;
  border-radius: 2px;
  color: #111;
  font: 700 8px/9px "Liberation Sans", sans-serif;
  text-align: center;
}
```
